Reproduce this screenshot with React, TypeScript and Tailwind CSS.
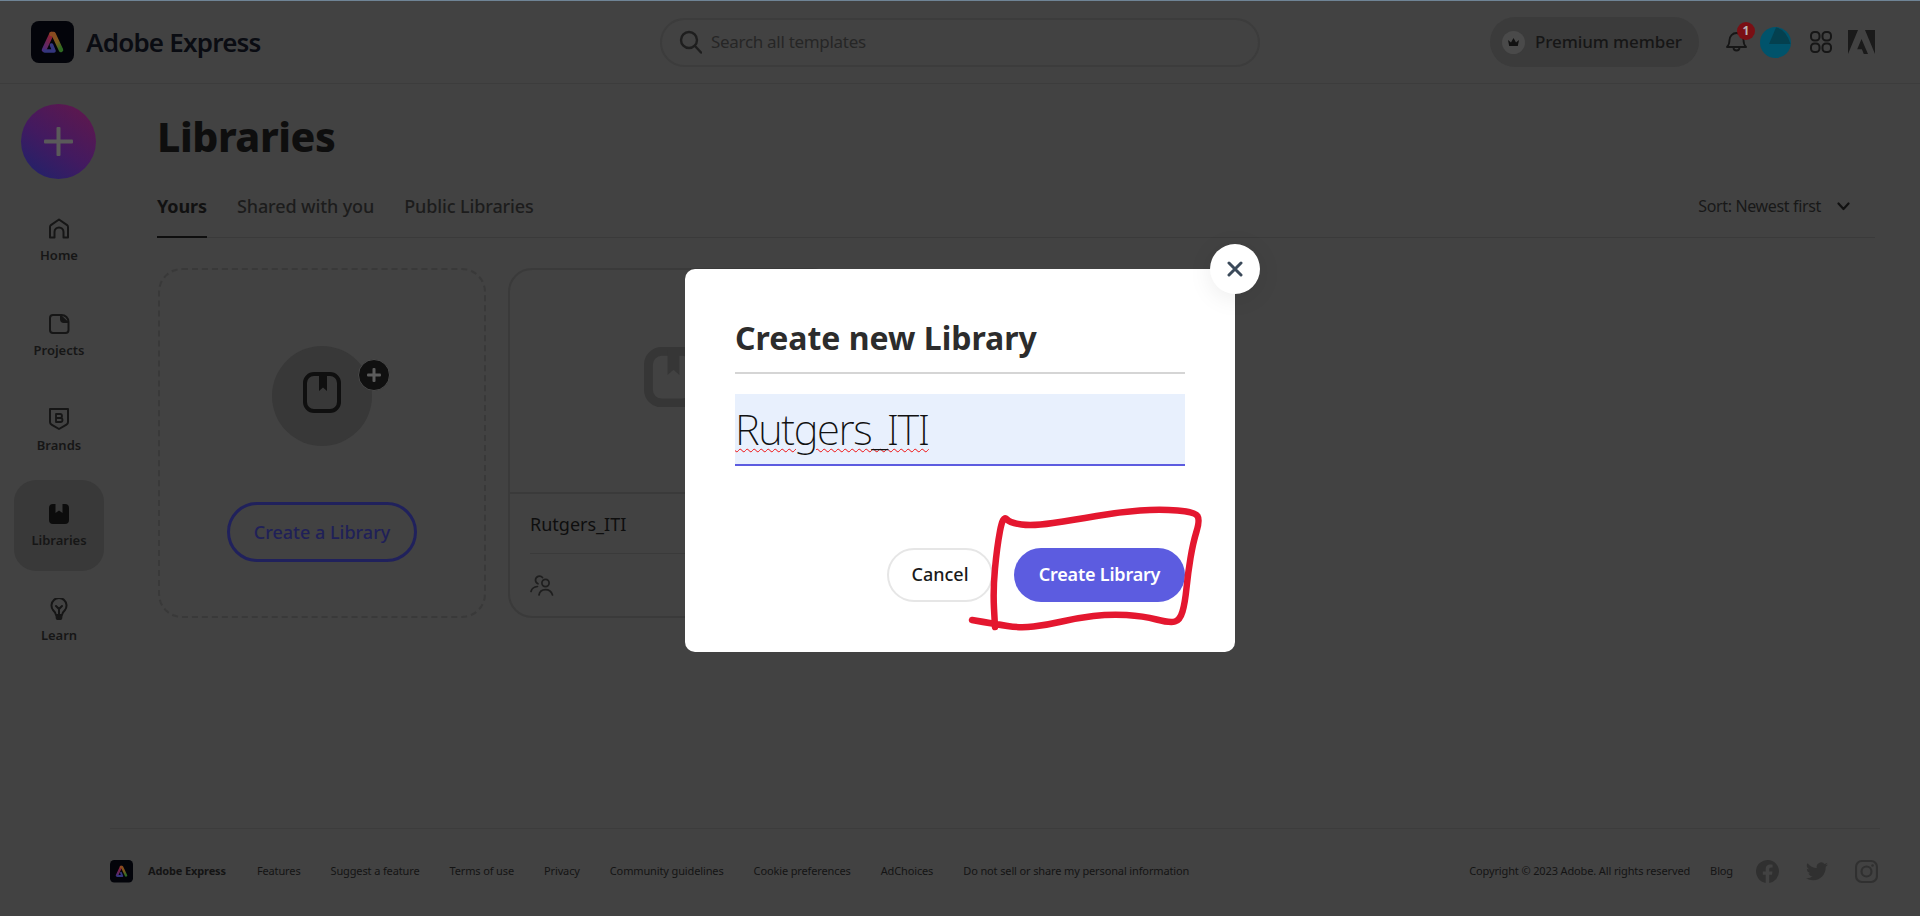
import React from "react"

function ExpressMark({ size }: { size: number }) {
  return (
    <svg width={size} height={size} viewBox="0 0 43 43" className="shrink-0">
      <defs>
        <linearGradient id="leftLeg" x1="0" y1="1" x2="0.6" y2="0">
          <stop offset="0" stopColor="#4b2a78" />
          <stop offset="1" stopColor="#8a2036" />
        </linearGradient>
        <linearGradient id="rightLeg" x1="0.2" y1="0" x2="0.8" y2="1">
          <stop offset="0" stopColor="#8a4a20" />
          <stop offset="0.55" stopColor="#7a5a1c" />
          <stop offset="1" stopColor="#2f6a22" />
        </linearGradient>
      </defs>
      <rect width="43" height="42" rx="8" fill="#03040a" />
      <path d="M13 29 L20.5 13" stroke="url(#leftLeg)" strokeWidth="4.5" strokeLinecap="round" fill="none" />
      <path d="M20.5 13 h2 L30 29" stroke="url(#rightLeg)" strokeWidth="4.5" strokeLinecap="round" strokeLinejoin="round" fill="none" />
      <path d="M14 30 L23 30 L20.5 24" stroke="#34367e" strokeWidth="3.6" strokeLinecap="round" strokeLinejoin="round" fill="none" />
    </svg>
  )
}

function HomeIcon() {
  return (
    <svg width="22" height="22" viewBox="0 0 22 22" fill="none" stroke="#161616" strokeWidth="2" strokeLinejoin="round">
      <path d="M2 19.5V9a2.5 2.5 0 0 1 .9-1.9L11 1.5l8.100 5.600A2.500 2.500 0 0 1 20 9v10.500h-4.500V14a4.500 4.500 0 0 0-9 0v5.500z" />
    </svg>
  )
}

function ProjectsIcon() {
  return (
    <svg width="22" height="22" viewBox="0 0 22 22" fill="none" stroke="#161616" strokeWidth="2" strokeLinejoin="round">
      <path d="M5 2h8.500a7 7 0 0 1 7 7v8a3 3 0 0 1-3 3H5a3 3 0 0 1-3-3V5a3 3 0 0 1 3-3z" />
      <path d="M13 2v4a3 3 0 0 0 3 3h4.500" fill="#161616" />
    </svg>
  )
}

function BrandsIcon() {
  return (
    <svg width="22" height="24" viewBox="0 0 22 24" fill="none" stroke="#161616" strokeWidth="2" strokeLinejoin="round">
      <path d="M2 2h18v13a3 3 0 0 1-1.500 2.600L11 22l-7.500-4.400A3 3 0 0 1 2 15z" />
      <path d="M8 7h4a2 2 0 0 1 0 4H8zM8 11h4.500a2 2 0 0 1 0 4H8z" strokeWidth="1.800" />
    </svg>
  )
}

function LibrariesFilled() {
  return (
    <svg width="22" height="22" viewBox="0 0 22 22">
      <path
        fillRule="evenodd"
        fill="#0c0c0c"
        d="M5 1h2.500v9l3.500-2.500 3.500 2.500V1H17a4 4 0 0 1 4 4v12a4 4 0 0 1-4 4H5a4 4 0 0 1-4-4V5a4 4 0 0 1 4-4z"
      />
    </svg>
  )
}

function LearnIcon() {
  return (
    <svg width="20" height="22" viewBox="0 0 20 22" fill="none" stroke="#161616" strokeWidth="2" strokeLinecap="round" strokeLinejoin="round">
      <path d="M7 17c0-2-1-3-3-5a7.500 7.500 0 1 1 12 0c-2 2-3 3-3 5z" />
      <path d="M10 17v-6M7 8l3 3 3-3" />
      <path d="M7.500 18.500h5c0 1.800-1 3-2.500 3s-2.500-1.200-2.500-3z" fill="#161616" />
    </svg>
  )
}

function BookmarkBox({ size, stroke, color }: { size: number; stroke: number; color: string }) {
  return (
    <svg width={size} height={size * 1.08} viewBox="0 0 38 41" fill="none">
      <rect x={stroke / 2} y={stroke / 2} width={38 - stroke} height={41 - stroke} rx="9" stroke={color} strokeWidth={stroke} />
      <path d="M16 2h8v17l-4-3.500-4 3.500z" fill={color} />
    </svg>
  )
}

function PeopleIcon() {
  return (
    <svg width="24" height="22" viewBox="0 0 24 22" fill="none" stroke="#1e1e1e" strokeWidth="1.700" strokeLinecap="round">
      <circle cx="15.500" cy="9" r="3.600" />
      <path d="M9 21c.6-3.500 3.200-5.300 6.500-5.300S21.400 17.500 22.500 21" />
      <path d="M12.500 3.500A4 4 0 0 0 5.500 6c0 1.800 1 3.200 2.500 3.800" />
      <path d="M1 17.500C1.800 14.500 4 12.800 7.500 12.500" />
    </svg>
  )
}

function SocialIcons() {
  return (
    <div className="flex items-center gap-[27px]">
      <svg width="23" height="23" viewBox="0 0 24 24" fill="#303030">
        <path d="M24 12a12 12 0 1 0-13.900 11.900v-8.400H7.100V12h3V9.400c0-3 1.800-4.700 4.500-4.700 1.300 0 2.700.2 2.700.2v3h-1.500c-1.500 0-2 .9-2 1.900V12h3.400l-.5 3.500h-2.900v8.400A12 12 0 0 0 24 12z" />
      </svg>
      <svg width="22" height="19" viewBox="0 0 24 20" fill="#303030">
        <path d="M24 2.400a9.800 9.800 0 0 1-2.800.8A4.900 4.900 0 0 0 23.300.5a9.800 9.800 0 0 1-3.100 1.200 4.900 4.900 0 0 0-8.400 4.500A13.900 13.900 0 0 1 1.700.9a4.900 4.900 0 0 0 1.500 6.600 4.900 4.900 0 0 1-2.200-.6v.1a4.900 4.900 0 0 0 3.900 4.800 4.900 4.900 0 0 1-2.200.1 4.900 4.900 0 0 0 4.600 3.400A9.900 9.900 0 0 1 0 17.300 13.900 13.900 0 0 0 7.500 19.500c9.100 0 14-7.500 14-14v-.6A10 10 0 0 0 24 2.400z" />
      </svg>
      <svg width="23" height="23" viewBox="0 0 24 24" fill="none" stroke="#303030" strokeWidth="2.200">
        <rect x="1.100" y="1.100" width="21.800" height="21.800" rx="6" />
        <circle cx="12" cy="12" r="5.200" />
        <circle cx="18.300" cy="5.700" r="1.300" fill="#303030" stroke="none" />
      </svg>
    </div>
  )
}

const navItems = [
  { label: "Home", icon: <HomeIcon /> },
  { label: "Projects", icon: <ProjectsIcon /> },
  { label: "Brands", icon: <BrandsIcon /> },
  { label: "Libraries", icon: <LibrariesFilled />, active: true },
  { label: "Learn", icon: <LearnIcon /> },
]

const footerLinks = [
  "Features",
  "Suggest a feature",
  "Terms of use",
  "Privacy",
  "Community guidelines",
  "Cookie preferences",
  "AdChoices",
  "Do not sell or share my personal information",
]

// the red marker stroke round the button, traced point by point
const scribble = [
  [972, 620], [995, 624], [1020, 628], [1047, 625], [1077, 618], [1110, 614], [1143, 616], [1170, 623],
  [1180, 620], [1185, 603], [1188, 573], [1193, 543], [1200, 520], [1195, 512], [1160, 509], [1120, 512],
  [1073, 520], [1033, 526], [1010, 523], [1003, 515], [997, 547], [993, 590], [995, 627],
]

function scribblePath() {
  let d = `M${scribble[0][0]} ${scribble[0][1]}`
  for (let i = 1; i < scribble.length - 1; i++) {
    const [x, y] = scribble[i]
    const [nx, ny] = scribble[i + 1]
    d += ` Q${x} ${y} ${(x + nx) / 2} ${(y + ny) / 2}`
  }
  const last = scribble[scribble.length - 1]
  return d + ` L${last[0]} ${last[1]}`
}

export default function App() {
  return (
    <div className="relative flex h-[916px] w-[1920px] flex-col overflow-hidden bg-[#424242] font-['Noto_Sans','Liberation_Sans',sans-serif] text-[#141414]">
      <div className="h-px shrink-0 bg-[#6f8496]" />

      {/* Header */}
      <header className="flex h-[83px] shrink-0 items-center border-b border-[#3c3c3c] pl-[31px] pr-[45px]">
        <div className="flex w-[629px] items-center gap-[12px]">
          <ExpressMark size={43} />
          <span className="text-[26px] font-semibold leading-none tracking-[-0.8px] text-[#0a0c12]">Adobe Express</span>
        </div>
        <div className="flex h-[49px] w-[600px] items-center gap-[9px] rounded-full border-2 border-[#3c3c3c] pl-[17px]">
          <svg width="23" height="24" viewBox="0 0 23 24" fill="none" stroke="#1e1e1e" strokeWidth="2.400" strokeLinecap="round">
            <circle cx="10" cy="10" r="8" />
            <path d="M16 16l6 6.500" />
          </svg>
          <span className="text-[17px] tracking-[-0.3px] text-[#262626]">Search all templates</span>
        </div>
        <div className="ml-auto flex items-center">
          <div className="flex h-[50px] w-[209px] items-center gap-[10px] rounded-full bg-[#3b3b3b] pl-[12px]">
            <div className="flex h-[23px] w-[23px] items-center justify-center rounded-full bg-[#4a4a4a]">
              <svg width="13" height="11" viewBox="0 0 13 11" fill="#111">
                <path d="M1 3l3 2.500L6.500 1 9 5.500 12 3l-1.200 6H2.200z" />
              </svg>
            </div>
            <span className="text-[17px] font-medium tracking-[-0.1px] text-[#161616]">Premium member</span>
          </div>
          <div className="relative ml-[27px] h-[22px] w-[21px]">
            <svg width="21" height="22" viewBox="0 0 21 22" fill="none" stroke="#161616" strokeWidth="1.800" strokeLinejoin="round">
              <path d="M1 16c2-2 2.500-3.500 2.500-7a7 7 0 0 1 14 0c0 3.500.5 5 2.500 7z" />
              <path d="M7.500 16.500a3 3 0 0 0 6 0" />
            </svg>
            <span className="absolute -right-[8px] -top-[9px] flex h-[18px] w-[18px] items-center justify-center rounded-full bg-[#7a0f14] text-[12px] font-bold leading-none text-[#b5b5b5]">
              1
            </span>
          </div>
          <svg width="31" height="31" viewBox="0 0 31 31" className="ml-[13px]">
            <circle cx="15.500" cy="15.500" r="15.500" fill="#00536b" />
            <path d="M9 17L16 0.500Q26 2 30.500 17z" fill="#04404f" />
          </svg>
          <svg width="22" height="22" viewBox="0 0 22 22" fill="none" stroke="#161616" strokeWidth="2" className="ml-[19px]">
            <rect x="1" y="1" width="8.500" height="8.500" rx="3.500" />
            <rect x="12.500" y="1" width="8.500" height="8.500" rx="3.500" />
            <rect x="1" y="12.500" width="8.500" height="8.500" rx="3.500" />
            <rect x="12.500" y="12.500" width="8.500" height="8.500" rx="3.500" />
          </svg>
          <svg width="27" height="24" viewBox="0 0 27 24" fill="#1a1a1a" className="ml-[16px]">
            <path d="M0 0h10L0 24zM17 0h10v24zM13.500 9l6.500 15h-4.200l-1.900-4.800H9.200z" />
          </svg>
        </div>
      </header>

      {/* Body */}
      <div className="flex min-h-0 flex-1">
        <aside className="w-[118px] shrink-0 pl-[14px] pt-[20px]">
          <div className="ml-[7px] flex h-[75px] w-[75px] items-center justify-center rounded-full bg-[linear-gradient(35deg,#20226a_5%,#421a60_45%,#5a1850_85%)]">
            <svg width="29" height="29" viewBox="0 0 29 29" fill="#5a5a5a">
              <rect x="12.500" width="4" height="29" rx="1" />
              <rect y="12.500" width="29" height="4" rx="1" />
            </svg>
          </div>
          <nav className="mt-[16px] flex flex-col gap-[4px]">
            {navItems.map((item) => (
              <div
                key={item.label}
                className={
                  item.active
                    ? "flex h-[91px] w-[90px] flex-col items-center rounded-[22px] bg-[#393939] pt-[23px]"
                    : "flex h-[91px] w-[90px] flex-col items-center rounded-[22px] pt-[23px]"
                }
              >
                <div className="flex h-[22px] items-center">{item.icon}</div>
                <span className="mt-[6px] text-[13px] font-semibold leading-[18px] text-[#161616]">{item.label}</span>
              </div>
            ))}
          </nav>
        </aside>

        <main className="flex-1 pl-[39px] pr-[45px]">
          <h1 className="pt-[27px] text-[41px] font-extrabold leading-[50px] tracking-[-0.45px] text-[#0e0e0e]">Libraries</h1>

          <div className="mt-[33px] flex h-[44px] items-start border-b border-[#3a3a3a]">
            <div className="flex gap-[30px] text-[18px] leading-[24px] tracking-[-0.12px]">
              <span className="h-[44px] w-[50px] border-b-2 border-[#0e0e0e] font-bold text-[#111]">Yours</span>
              <span className="font-medium text-[#1c1c1c]">Shared with you</span>
              <span className="font-medium text-[#1c1c1c]">Public Libraries</span>
            </div>
            <div className="ml-auto flex items-center gap-[16px] pr-[25px] text-[16px] leading-[24px] tracking-[-0.35px] text-[#181818]">
              <span>Sort: Newest first</span>
              <svg width="13" height="9" viewBox="0 0 13 9" fill="none" stroke="#111" strokeWidth="2.200" strokeLinecap="round" strokeLinejoin="round">
                <path d="M1.500 1.500L6.500 7l5-5.500" />
              </svg>
            </div>
          </div>

          <div className="ml-px mt-[30px] flex gap-[22px]">
            {/* New library card */}
            <div className="flex h-[350px] w-[328px] flex-col items-center rounded-[24px] border-2 border-dashed border-[#393939] pt-[76px]">
              <div className="relative flex h-[100px] w-[100px] items-center justify-center rounded-full bg-[#383838] pb-[6px]">
                <BookmarkBox size={38} stroke={4} color="#0f0f0f" />
                <span className="absolute -right-[18px] top-[13px] flex h-[32px] w-[32px] items-center justify-center rounded-full border border-[#4a4a4a] bg-[#101010]">
                  <svg width="14" height="14" viewBox="0 0 14 14" fill="#5c5c5c">
                    <rect x="5.500" width="3" height="14" rx="1" />
                    <rect y="5.500" width="14" height="3" rx="1" />
                  </svg>
                </span>
              </div>
              <button className="mt-[56px] flex h-[60px] w-[190px] items-center justify-center rounded-full border-[3px] border-[#20215c] text-[18px] font-medium text-[#1f2058]">
                Create a Library
              </button>
            </div>

            {/* Existing library card */}
            <div className="h-[350px] w-[328px] rounded-[24px] border-2 border-[#3a3a3a]">
              <div className="flex h-[224px] items-center justify-center border-b-2 border-[#3a3a3a] pb-[8px]">
                <BookmarkBox size={56} stroke={6} color="#363636" />
              </div>
              <div className="px-[20px]">
                <div className="h-[60px] border-b border-[#3a3a3a] pt-[17px] text-[18px] leading-[26px] text-[#0e0e0e]">Rutgers_ITI</div>
                <div className="pt-[20px]">
                  <PeopleIcon />
                </div>
              </div>
            </div>
          </div>
        </main>
      </div>

      {/* Footer */}
      <footer className="ml-[110px] flex h-[88px] w-[1770px] shrink-0 items-center border-t border-[#3c3c3c] pb-[2px] pr-[2px] text-[11px] tracking-[-0.13px] text-[#141414]">
        <ExpressMark size={23} />
        <span className="ml-[15px] mr-[31px] font-bold">Adobe Express</span>
        <div className="flex gap-[30px]">
          {footerLinks.map((link) => (
            <span key={link}>{link}</span>
          ))}
        </div>
        <div className="ml-auto flex items-center">
          <span>Copyright © 2023 Adobe. All rights reserved</span>
          <span className="ml-[20px] mr-[23px]">Blog</span>
          <SocialIcons />
        </div>
      </footer>

      {/* Dialog */}
      <div className="absolute left-[685px] top-[269px] h-[383px] w-[550px] rounded-[10px] bg-white px-[50px] pt-[51px]">
        <h2 className="border-b-2 border-[#d5d5d5] pb-[16px] text-[32px] font-bold leading-[36px] text-[#2c2c2c]">Create new Library</h2>
        <div className="mt-[20px] flex h-[72px] items-center border-b-2 border-[#5c5ce0] bg-[#e8f0fd] text-[42px] font-extralight leading-none tracking-[-1.4px] text-[#111]">
          <span className="underline decoration-[#f01010] decoration-wavy decoration-1 underline-offset-[3px]">Rutgers_ITI</span>
        </div>
        <div className="mt-[82px] flex items-center justify-end gap-[21px]">
          <button className="h-[54px] w-[106px] rounded-full border-2 border-[#e6e6e6] pb-[2px] text-[18px] font-medium text-[#1a1a1a]">Cancel</button>
          <button className="h-[54px] w-[171px] rounded-full bg-[#5c5ce0] pb-[2px] text-[18px] font-semibold tracking-[-0.2px] text-white">Create Library</button>
        </div>

        <button className="absolute -right-[25px] -top-[25px] flex h-[50px] w-[50px] items-center justify-center rounded-full bg-white shadow-[0_4px_24px_rgba(0,0,0,0.08)]">
          <svg width="16" height="16" viewBox="0 0 16 16" stroke="#3b4a5a" strokeWidth="3" strokeLinecap="round">
            <path d="M2 2l12 12M14 2L2 14" />
          </svg>
        </button>
      </div>

      {/* Red hand-drawn annotation */}
      <svg className="pointer-events-none absolute left-[960px] top-[500px]" width="250" height="140" viewBox="960 500 250 140" fill="none">
        <path d={scribblePath()} stroke="#e4172f" strokeWidth="6.500" strokeLinecap="round" strokeLinejoin="round" />
      </svg>
    </div>
  )
}
